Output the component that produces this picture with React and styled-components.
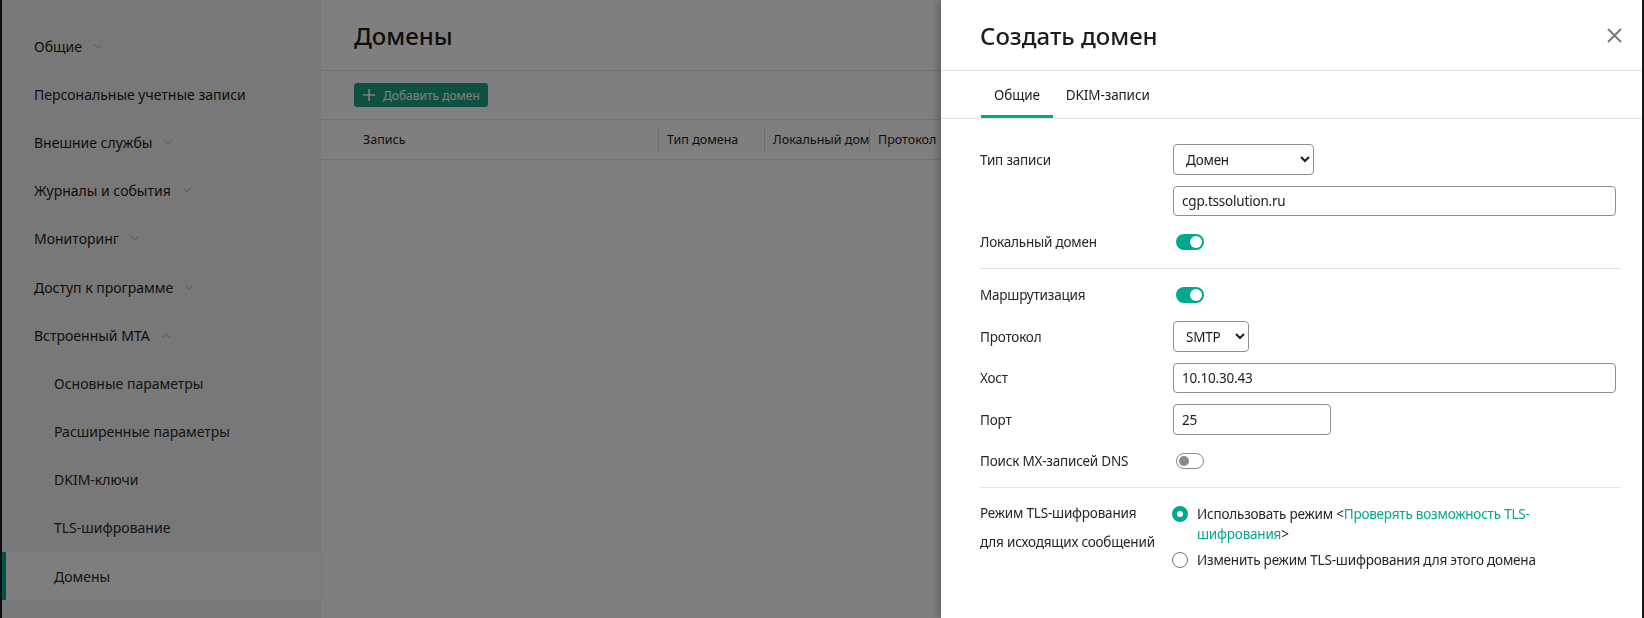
import React from 'react';
import styled, { createGlobalStyle } from 'styled-components';

const teal = '#00a88e';

const GlobalStyle = createGlobalStyle`
  html, body {
    margin: 0;
    height: 100%;
  }
  body {
    font-family: "Noto Sans", "Open Sans", sans-serif;
    font-size: 14px;
    color: #1d1d1b;
    background: #fff;
    overflow: hidden;
  }
  #root {
    height: 100%;
  }
  * {
    box-sizing: border-box;
  }
`;

const Page = styled.div`
  display: flex;
  height: 100vh;
  border-left: 2px solid #1c1c1c;
`;

/* ---------- sidebar ---------- */

const Sidebar = styled.nav`
  width: 320px;
  flex-shrink: 0;
  background: #f0f0f0;
  border-right: 1px solid #f8f8f8;
  padding-top: 22px;
`;

const NavItem = styled.div`
  display: flex;
  align-items: center;
  gap: 12px;
  height: 48.2px;
  padding-left: ${p => (p.$sub ? 48 : 28)}px;
  color: ${p => (p.$sub ? '#2a2a2a' : '#1d1d1b')};
  background: ${p => (p.$active ? '#fcfcfc' : 'transparent')};
  border-left: 4px solid ${p => (p.$active ? teal : 'transparent')};
`;

const Chevron = ({ up }) => (
  <svg width="8" height="5" viewBox="0 0 8 5" fill="none">
    <polyline
      points={up ? '0.5,4.5 4,1 7.5,4.5' : '0.5,0.5 4,4 7.5,0.5'}
      stroke="#c4c4c4"
      strokeWidth="1.2"
    />
  </svg>
);

/* ---------- main ---------- */

const Main = styled.main`
  flex: 1;
  min-width: 0;
  background: #fff;
  display: flex;
  flex-direction: column;
`;

const MainHeader = styled.header`
  height: 71px;
  display: flex;
  align-items: center;
  padding: 0 32px;
  border-bottom: 1px solid #e6e6e6;
`;

const PageTitle = styled.h1`
  margin: 0;
  font-size: 24px;
  font-weight: 500;
`;

const Toolbar = styled.div`
  height: 49px;
  display: flex;
  align-items: center;
  padding: 0 32px;
  border-bottom: 1px solid #e6e6e6;
`;

const AddButton = styled.button`
  display: flex;
  align-items: center;
  gap: 8px;
  height: 24px;
  padding: 0 8px 0 9px;
  border: none;
  border-radius: 3px;
  background: #1ca383;
  color: #fff;
  font-family: inherit;
  font-size: 12px;
  cursor: pointer;
`;

const TableHead = styled.div`
  display: flex;
  align-items: center;
  height: 40px;
  padding-left: 32px;
  border-bottom: 1px solid #e6e6e6;
  font-size: 12.5px;
`;

const HeadCell = styled.div`
  flex-shrink: 0;
  width: ${p => p.$w}px;
  height: 24px;
  display: flex;
  align-items: center;
  padding: 0 8px;
  white-space: nowrap;
  overflow: hidden;
  border-left: 1px solid ${p => (p.$first ? 'transparent' : '#dcdcdc')};
`;

/* ---------- drawer ---------- */

const Overlay = styled.div`
  position: fixed;
  inset: 0;
  background: rgba(0, 0, 0, 0.5);
`;

const Drawer = styled.aside`
  position: fixed;
  top: 0;
  right: 0;
  bottom: 0;
  width: 703px;
  background: #fff;
  border-right: 2px solid #1c1c1c;
  box-shadow: -3px 0 8px rgba(0, 0, 0, 0.25);
  display: flex;
  flex-direction: column;
`;

const DrawerHeader = styled.div`
  height: 71px;
  flex-shrink: 0;
  display: flex;
  align-items: center;
  justify-content: space-between;
  padding: 0 20px 0 39px;
  border-bottom: 1px solid #e5e5e5;
`;

const DrawerTitle = styled.h2`
  margin: 0;
  font-size: 24px;
  font-weight: 500;
`;

const CloseButton = styled.button`
  display: flex;
  padding: 0;
  border: none;
  background: none;
  cursor: pointer;
`;

const TabBar = styled.div`
  height: 48px;
  flex-shrink: 0;
  display: flex;
  padding-left: 40px;
  border-bottom: 1px solid #e5e5e5;
`;

const Tab = styled.div`
  display: flex;
  align-items: center;
  padding: 3px 13px 0;
  font-size: 13.5px;
  letter-spacing: -0.1px;
  border-bottom: 3px solid ${p => (p.$active ? teal : 'transparent')};
`;

const FormBody = styled.div`
  padding: 25px 21px 0 39px;
  font-size: 13.5px;
  letter-spacing: -0.2px;
`;

const Section = styled.div`
  display: flex;
  flex-direction: column;
  gap: 11px;
`;

const Divider = styled.hr`
  margin: 11px 0 11px;
  border: none;
  border-top: 1px solid #e5e5e5;
`;

const Row = styled.div`
  display: grid;
  grid-template-columns: 193px 1fr;
  align-items: ${p => (p.$top ? 'start' : 'center')};
  min-height: 30px;
  padding-right: 5px;
`;

const Label = styled.div`
  color: #262626;
  line-height: ${p => (p.$tall ? '29px' : '20px')};
`;

const Select = styled.select`
  width: ${p => p.$w}px;
  height: 31px;
  padding: 0 6px 0 8px;
  border: 1px solid #8f8f8f;
  border-radius: 4px;
  background: #fff;
  color: #1d1d1b;
  font-family: inherit;
  font-size: 13.5px;
  letter-spacing: -0.2px;
`;

const TextInput = styled.input`
  width: ${p => (p.$w ? `${p.$w}px` : '100%')};
  height: ${p => p.$h || 30}px;
  padding: 0 8px;
  border: 1px solid #8f8f8f;
  border-radius: 4px;
  color: #1d1d1b;
  font-family: inherit;
  font-size: 13.5px;
  letter-spacing: -0.2px;
`;

const Toggle = styled.span`
  display: inline-flex;
  align-items: center;
  justify-content: ${p => (p.$on ? 'flex-end' : 'flex-start')};
  width: 28px;
  height: 16px;
  margin-left: 3px;
  padding: 2px;
  border-radius: 8px;
  background: ${p => (p.$on ? teal : '#fff')};
  border: ${p => (p.$on ? 'none' : '1px solid #8a8a8a')};

  &::after {
    content: '';
    width: ${p => (p.$on ? 12 : 10)}px;
    height: ${p => (p.$on ? 12 : 10)}px;
    border-radius: 50%;
    background: ${p => (p.$on ? '#fff' : '#8a8a8a')};
  }
`;

const RadioGroup = styled.div`
  display: flex;
  flex-direction: column;
  gap: 6px;
  padding-top: 5px;
`;

const RadioOption = styled.label`
  display: flex;
  align-items: flex-start;
  gap: 9px;
  margin-left: -1px;
  line-height: 20px;
  color: #262626;
`;

const RadioDot = styled.span`
  flex-shrink: 0;
  width: 16px;
  height: 16px;
  margin-top: 2px;
  border-radius: 50%;
  background: #fff;
  border: ${p => (p.$checked ? `5px solid ${teal}` : '1px solid #767676')};
`;

const RadioText = styled.span`
  max-width: 360px;
`;

const Link = styled.a`
  color: ${teal};
  text-decoration: none;
`;

const navItems = [
  { text: 'Общие', chevron: 'down' },
  { text: 'Персональные учетные записи' },
  { text: 'Внешние службы', chevron: 'down' },
  { text: 'Журналы и события', chevron: 'down' },
  { text: 'Мониторинг', chevron: 'down' },
  { text: 'Доступ к программе', chevron: 'down' },
  { text: 'Встроенный МТА', chevron: 'up' },
  { text: 'Основные параметры', sub: true },
  { text: 'Расширенные параметры', sub: true },
  { text: 'DKIM-ключи', sub: true },
  { text: 'TLS-шифрование', sub: true },
  { text: 'Домены', sub: true, active: true },
];

const columns = [
  { title: 'Запись', w: 304 },
  { title: 'Тип домена', w: 106 },
  { title: 'Локальный домен', w: 105 },
  { title: 'Протокол', w: 110 },
  { title: 'Хост', w: 200 },
];

export default function App() {
  return (
    <>
      <GlobalStyle />
      <Page>
        <Sidebar>
          {navItems.map(item => (
            <NavItem key={item.text} $sub={item.sub} $active={item.active}>
              {item.text}
              {item.chevron && <Chevron up={item.chevron === 'up'} />}
            </NavItem>
          ))}
        </Sidebar>

        <Main>
          <MainHeader>
            <PageTitle>Домены</PageTitle>
          </MainHeader>
          <Toolbar>
            <AddButton>
              <svg width="12" height="12" viewBox="0 0 12 12">
                <path d="M6 0v12M0 6h12" stroke="#fff" strokeWidth="1.6" />
              </svg>
              Добавить домен
            </AddButton>
          </Toolbar>
          <TableHead>
            {columns.map((c, i) => (
              <HeadCell key={c.title} $w={c.w} $first={i === 0}>
                {c.title}
              </HeadCell>
            ))}
          </TableHead>
        </Main>
      </Page>

      <Overlay />

      <Drawer>
        <DrawerHeader>
          <DrawerTitle>Создать домен</DrawerTitle>
          <CloseButton>
            <svg width="15" height="15" viewBox="0 0 15 15">
              <path d="M1 1l13 13M14 1L1 14" stroke="#7a7a7a" strokeWidth="2" />
            </svg>
          </CloseButton>
        </DrawerHeader>

        <TabBar>
          <Tab $active>Общие</Tab>
          <Tab>DKIM-записи</Tab>
        </TabBar>

        <FormBody>
          <Section>
            <Row>
              <Label>Тип записи</Label>
              <Select $w={141} defaultValue="domain">
                <option value="domain">Домен</option>
              </Select>
            </Row>
            <Row>
              <span />
              <TextInput defaultValue="cgp.tssolution.ru" />
            </Row>
            <Row>
              <Label>Локальный домен</Label>
              <Toggle $on />
            </Row>
          </Section>

          <Divider />

          <Section>
            <Row>
              <Label>Маршрутизация</Label>
              <Toggle $on />
            </Row>
            <Row>
              <Label>Протокол</Label>
              <Select $w={76} defaultValue="smtp">
                <option value="smtp">SMTP</option>
              </Select>
            </Row>
            <Row>
              <Label>Хост</Label>
              <TextInput defaultValue="10.10.30.43" />
            </Row>
            <Row>
              <Label>Порт</Label>
              <TextInput $w={158} $h={31} defaultValue="25" />
            </Row>
            <Row>
              <Label>Поиск MX-записей DNS</Label>
              <Toggle />
            </Row>
          </Section>

          <Divider />

          <Section>
            <Row $top>
              <Label $tall>
                Режим TLS-шифрования
                <br />
                для исходящих сообщений
              </Label>
              <RadioGroup>
                <RadioOption>
                  <RadioDot $checked />
                  <RadioText>
                    Использовать режим &lt;<Link>Проверять возможность TLS-шифрования</Link>&gt;
                  </RadioText>
                </RadioOption>
                <RadioOption>
                  <RadioDot />
                  <RadioText>Изменить режим TLS-шифрования для этого домена</RadioText>
                </RadioOption>
              </RadioGroup>
            </Row>
          </Section>
        </FormBody>
      </Drawer>
    </>
  );
}
